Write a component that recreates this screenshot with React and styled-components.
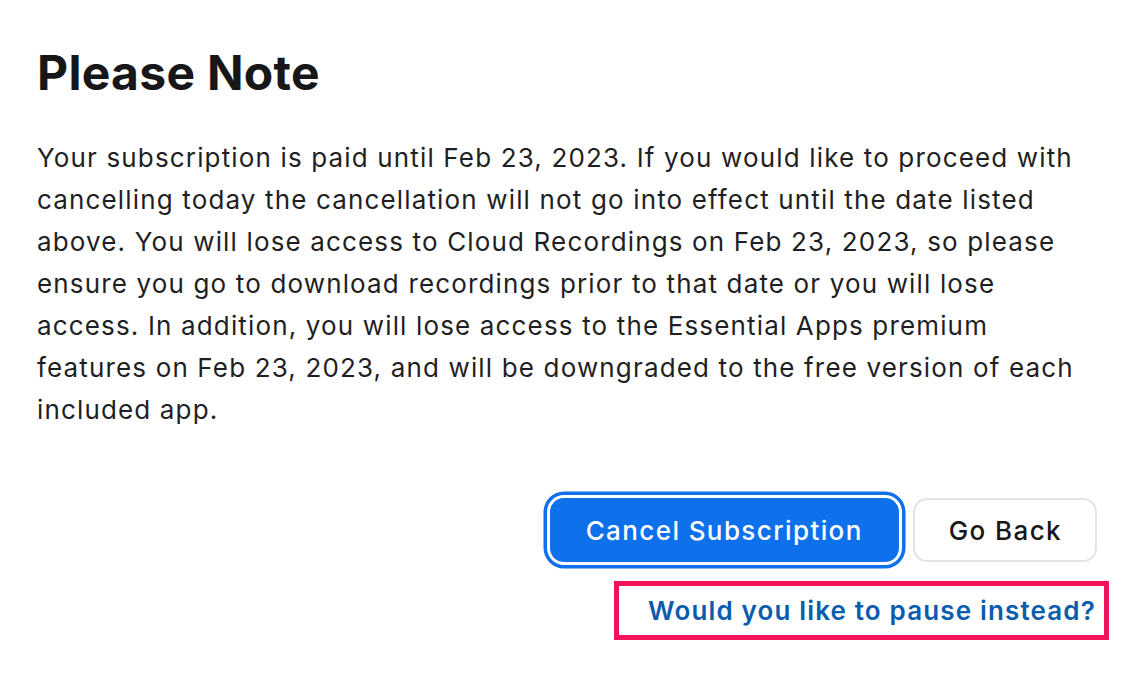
import React from "react";
import styled, { createGlobalStyle } from "styled-components";

const Global = createGlobalStyle`
  html, body { margin: 0; padding: 0; background: #ffffff; }
  body { font-family: Inter, "Noto Sans", "Liberation Sans", sans-serif; color: #1f1f23; }
`;

const Page = styled.div`
  width: 1132px;
  height: 674px;
  box-sizing: border-box;
  padding: 44px 35px 0 37px;
  display: flex;
  flex-direction: column;
`;

const Title = styled.h1`
  margin: 0;
  font-size: 48px;
  line-height: 58px;
  font-weight: 700;
  letter-spacing: 0.3px;
  color: #17171a;
`;

const Body = styled.p`
  margin: 35px 0 0;
  font-size: 26px;
  line-height: 42px;
  font-weight: 400;
  letter-spacing: 1.15px;
  color: #1f1f23;
`;

const Actions = styled.div`
  margin-top: 67px;
  display: flex;
  flex-direction: column;
  align-items: flex-end;
`;

const ButtonRow = styled.div`
  display: flex;
  gap: 14px;
  align-items: center;
`;

const Button = styled.button`
  height: 64px;
  box-sizing: border-box;
  border-radius: 14px;
  font-family: inherit;
  font-size: 26px;
  font-weight: 500;
  letter-spacing: 1.4px;
  padding: ${(p) => (p.$primary ? "0 36px 0 36px" : "0 33px 0 34px")};
  cursor: pointer;
  border: ${(p) => (p.$primary ? "none" : "2px solid #e3e3e6")};
  background: ${(p) => (p.$primary ? "#0e71eb" : "#ffffff")};
  color: ${(p) => (p.$primary ? "#ffffff" : "#17171a")};
  box-shadow: ${(p) =>
    p.$primary ? "0 0 0 3px #ffffff, 0 0 0 6.5px #0e71eb" : "none"};
`;

const Highlight = styled.div`
  margin-top: 19px;
  margin-right: -12px;
  border: 5px solid #f2125a;
  padding: 9px 8px 9px 29px;
`;

const PauseLink = styled.a`
  font-size: 26px;
  line-height: 31px;
  font-weight: 600;
  letter-spacing: 1.15px;
  color: #0b5cad;
  text-decoration: none;
  display: block;
`;

export default function App() {
  return (
    <>
      <Global />
      <Page>
        <Title>Please Note</Title>
        <Body>
          Your subscription is paid until Feb 23, 2023. If you would like to
          proceed with cancelling today the cancellation will not go into
          effect until the date listed above. You will lose access to Cloud
          Recordings on Feb 23, 2023, so please ensure you go to download
          recordings prior to that date or you will lose access. In addition,
          you will lose access to the Essential Apps premium features on Feb
          23, 2023, and will be downgraded to the free version of each
          included app.
        </Body>
        <Actions>
          <ButtonRow>
            <Button $primary>Cancel Subscription</Button>
            <Button>Go Back</Button>
          </ButtonRow>
          <Highlight>
            <PauseLink href="#">Would you like to pause instead?</PauseLink>
          </Highlight>
        </Actions>
      </Page>
    </>
  );
}
